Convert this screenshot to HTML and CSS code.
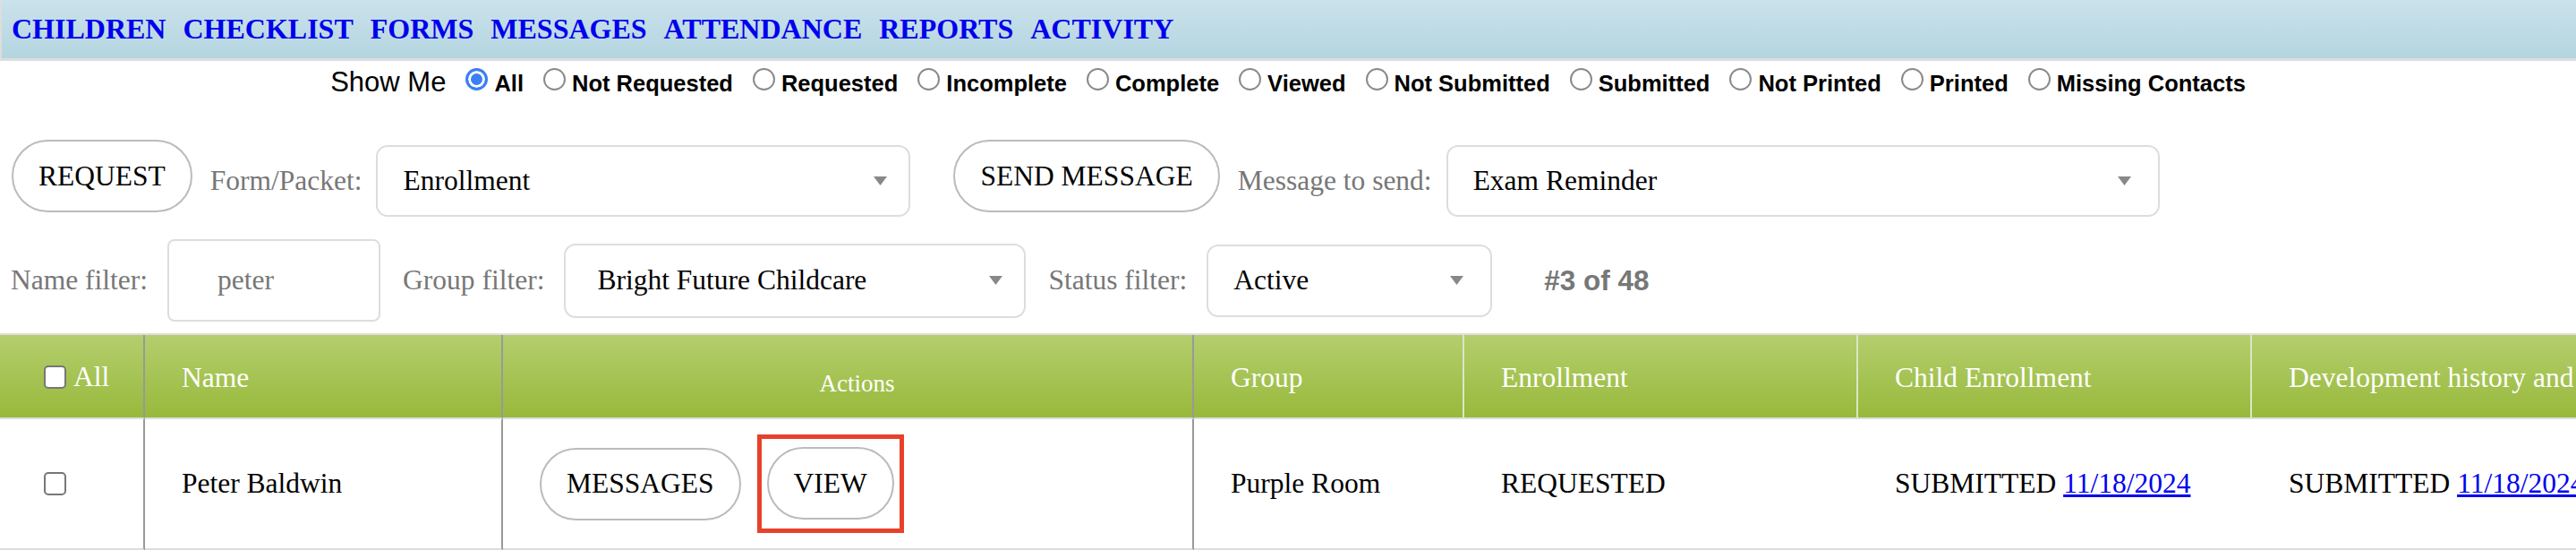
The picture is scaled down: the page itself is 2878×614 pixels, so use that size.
FILE: index.html
```html
<!DOCTYPE html>
<html lang="en">
<head>
<meta charset="utf-8">
<title>Children</title>
<link rel="stylesheet" href="styles.css">
</head>
<body>
<nav class="topnav">
  <a href="#">CHILDREN</a>
  <a href="#">CHECKLIST</a>
  <a href="#">FORMS</a>
  <a href="#">MESSAGES</a>
  <a href="#">ATTENDANCE</a>
  <a href="#">REPORTS</a>
  <a href="#">ACTIVITY</a>
</nav>

<form class="filters">
  <div class="showme">
    <span class="showme-title">Show Me</span>
    <label class="opt"><input type="radio" name="show" checked>All</label>
    <label class="opt"><input type="radio" name="show">Not Requested</label>
    <label class="opt"><input type="radio" name="show">Requested</label>
    <label class="opt"><input type="radio" name="show">Incomplete</label>
    <label class="opt"><input type="radio" name="show">Complete</label>
    <label class="opt"><input type="radio" name="show">Viewed</label>
    <label class="opt"><input type="radio" name="show">Not Submitted</label>
    <label class="opt"><input type="radio" name="show">Submitted</label>
    <label class="opt"><input type="radio" name="show">Not Printed</label>
    <label class="opt"><input type="radio" name="show">Printed</label>
    <label class="opt"><input type="radio" name="show">Missing Contacts</label>
  </div>

  <div class="toolbar">
    <button type="button" class="pill">REQUEST</button>
    <span class="lbl">Form/Packet:</span>
    <div class="select w-form"><span>Enrollment</span><svg class="caret" width="15" height="10" viewBox="0 0 15 10"><path d="M0 0H15L7.5 10Z"/></svg></div>
    <button type="button" class="pill">SEND MESSAGE</button>
    <span class="lbl">Message to send:</span>
    <div class="select w-msg"><span>Exam Reminder</span><svg class="caret" width="15" height="10" viewBox="0 0 15 10"><path d="M0 0H15L7.5 10Z"/></svg></div>
  </div>

  <div class="filterbar">
    <span class="lbl">Name filter:</span>
    <input type="text" class="textbox" value="peter">
    <span class="lbl">Group filter:</span>
    <div class="select w-group"><span>Bright Future Childcare</span><svg class="caret" width="15" height="10" viewBox="0 0 15 10"><path d="M0 0H15L7.5 10Z"/></svg></div>
    <span class="lbl">Status filter:</span>
    <div class="select w-status"><span>Active</span><svg class="caret" width="15" height="10" viewBox="0 0 15 10"><path d="M0 0H15L7.5 10Z"/></svg></div>
    <span class="count">#3 of 48</span>
  </div>
</form>

<div class="table-wrap">
  <table class="kids">
    <thead>
      <tr>
        <th class="c-check dark"><span class="all"><input type="checkbox" class="cb">All</span></th>
        <th class="c-name dark">Name</th>
        <th class="c-actions dark actions-head">Actions</th>
        <th class="c-group light">Group</th>
        <th class="c-enr light">Enrollment</th>
        <th class="c-child light">Child Enrollment</th>
        <th class="c-dev">Development history and physical</th>
      </tr>
    </thead>
    <tbody>
      <tr>
        <td class="c-check dark"><input type="checkbox" class="cb"></td>
        <td class="c-name dark">Peter Baldwin</td>
        <td class="c-actions dark">
          <div class="row-actions">
            <button type="button" class="pill">MESSAGES</button>
            <span class="highlight"><button type="button" class="pill">VIEW</button></span>
          </div>
        </td>
        <td class="c-group">Purple Room</td>
        <td class="c-enr">REQUESTED</td>
        <td class="c-child">SUBMITTED <a href="#">11/18/2024</a></td>
        <td class="c-dev">SUBMITTED <a href="#">11/18/2024</a></td>
      </tr>
    </tbody>
  </table>
</div>
</body>
</html>
```
FILE: styles.css
```css
* { box-sizing: border-box; }

html, body {
  margin: 0;
  padding: 0;
  overflow: hidden;
  background: #fff;
}

body {
  font-family: "Liberation Serif", "Times New Roman", serif;
  font-size: 31.5px;
  color: #000;
}

/* top navigation */
.topnav {
  height: 68px;
  display: flex;
  align-items: center;
  gap: 19px;
  padding-left: 11px;
  background: linear-gradient(#cae2eb, #b4d5e0);
  border-left: 2px solid #ddd;
  border-bottom: 3px solid #ddd;
}
.topnav a {
  font-weight: bold;
  font-size: 32px;
  color: #0000ee;
  text-decoration: none;
}

/* show me radios */
.showme {
  display: flex;
  justify-content: center;
  align-items: baseline;
  margin-top: 7px;
  font-family: "Liberation Sans", Arial, sans-serif;
}
.showme-title {
  font-size: 31px;
  line-height: 34px;
}
.opt {
  font-weight: bold;
  font-size: 25.5px;
  line-height: 34px;
  white-space: nowrap;
}
.opt input {
  appearance: none;
  -webkit-appearance: none;
  display: inline-block;
  width: 25px;
  height: 25px;
  margin: 0 7px 1px 22px;
  border: 2px solid #8a8a8a;
  border-radius: 50%;
  background: #fff;
  vertical-align: baseline;
}
.opt input:checked {
  border: 3px solid #3b7ff5;
  background: #3b7ff5;
  box-shadow: inset 0 0 0 3px #fff;
}

/* pill buttons */
.pill {
  font: inherit;
  height: 81px;
  padding: 0 28px;
  border: 2px solid #bbb;
  border-radius: 41px;
  background: #fff;
  color: #000;
  white-space: nowrap;
}

.lbl {
  color: #777;
  white-space: nowrap;
}

.select {
  display: flex;
  align-items: center;
  justify-content: space-between;
  height: 80px;
  padding: 0 24px 0 28px;
  border: 2px solid #ddd;
  border-radius: 13px;
  background: #fff;
  white-space: nowrap;
}
.caret { fill: #888; flex: none; }
.w-form { width: 597px; }
.w-msg { width: 797px; padding-right: 30px; }
.w-group { width: 516px; height: 83px; padding-left: 35px; }
.w-status { width: 319px; height: 81px; padding-right: 30px; }

/* row 1 */
.toolbar {
  display: flex;
  align-items: center;
  gap: 16px;
  margin-top: 46px;
  padding-left: 13px;
}
.toolbar .pill { margin-bottom: 11px; }
.toolbar .pill + .lbl { margin-left: 4px; }
.toolbar .select + .pill { margin-left: 32px; }

/* row 2 */
.filterbar {
  display: flex;
  align-items: center;
  gap: 22px;
  margin-top: 19px;
  padding-left: 12px;
}
.filterbar .select + .lbl,
.filterbar .textbox + .lbl { margin-left: 3px; }
.textbox {
  font: inherit;
  color: #777;
  width: 238px;
  height: 92px;
  padding: 0 0 0 54px;
  border: 2px solid #ddd;
  border-radius: 8px;
  background: #fff;
}
.count {
  margin-left: 36px;
  font-family: "Liberation Sans", Arial, sans-serif;
  font-weight: bold;
  font-size: 31.5px;
  color: #777;
}

/* table */
.table-wrap {
  margin-top: 13px;
  width: 100%;
  overflow: hidden;
}
.kids {
  border-collapse: separate;
  border-spacing: 0;
  table-layout: fixed;
  width: 3116px;
  border-top: 2px solid #ddd;
}
.kids th,
.kids td {
  white-space: nowrap;
  overflow: hidden;
  vertical-align: middle;
  text-align: left;
  padding: 0 20px 0 41px;
}
.kids th {
  height: 94px;
  padding-top: 4px;
  font-weight: normal;
  color: #fff;
  background: linear-gradient(#b4ce6e, #98b93b);
  border-bottom: 2px solid #ddd;
}
.kids td {
  height: 147px;
  border-bottom: 3px solid #ddd;
}
.c-check { width: 162px; }
.c-name { width: 400px; }
.c-actions { width: 772px; }
.c-group { width: 302px; }
.c-enr { width: 440px; }
.c-child { width: 440px; }
.c-dev { width: 600px; }

.kids .c-check { padding-left: 49px; }
.kids .dark { border-right: 2px solid #999; }
.kids th.light { border-right: 2px solid #dbe6c4; }
.kids th.actions-head {
  text-align: center;
  font-size: 27px;
  padding-top: 17px;
}

.all {
  display: inline-flex;
  align-items: center;
  gap: 8px;
}
.cb {
  appearance: none;
  -webkit-appearance: none;
  display: block;
  width: 25px;
  height: 26px;
  margin: 0;
  border: 2px solid #777;
  border-radius: 5px;
  background: #fff;
}

.row-actions {
  display: flex;
  align-items: center;
  gap: 18px;
}
.highlight {
  display: flex;
  padding: 9px 6px 10px;
  border: 5px solid #e8412b;
}

.kids a { color: #0000ee; text-decoration: underline; }
```
